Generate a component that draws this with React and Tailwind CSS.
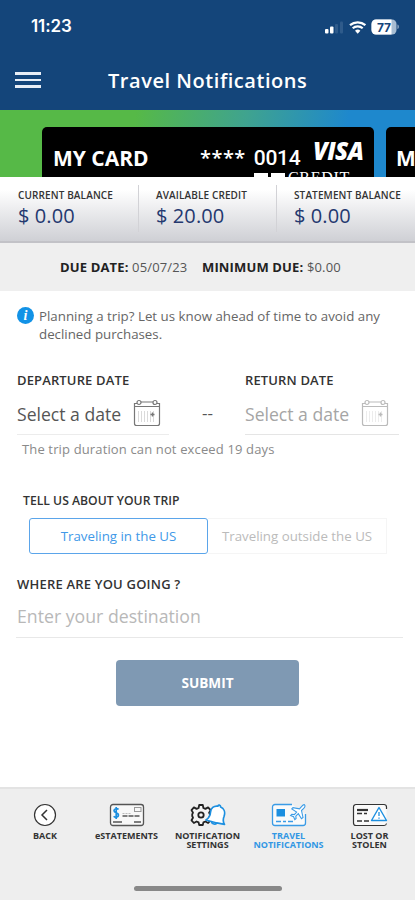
import React, { useState } from 'react';

const balances = [
  { label: 'CURRENT BALANCE', value: '$ 0.00', box: 'w-[139px] pl-[18px] border-r' },
  { label: 'AVAILABLE CREDIT', value: '$ 20.00', box: 'w-[138px] pl-[17px] border-r' },
  { label: 'STATEMENT BALANCE', value: '$ 0.00', box: 'w-[138px] pl-[17px]' },
];

function StatusIcons() {
  return (
    <svg width="78" height="18" viewBox="0 0 78 18" fill="none">
      {/* Signal */}
      <rect x="2" y="11" width="3.5" height="4.5" rx="1" fill="#fff" />
      <rect x="7" y="8.5" width="3.5" height="7" rx="1" fill="#fff" />
      <rect x="12" y="6" width="3" height="9.5" rx="1" fill="#2f5b8b" />
      <rect x="17" y="3.5" width="3" height="12" rx="1" fill="#2f5b8b" />
      {/* Wifi */}
      <path d="M27 7.2a12 12 0 0 1 15.4 0" stroke="#fff" strokeWidth="2.3" />
      <path d="M29.7 10.3a7.5 7.5 0 0 1 10 0" stroke="#fff" strokeWidth="2.2" />
      <path d="M34.7 15.8l-2.7-3a4 4 0 0 1 5.4 0z" fill="#fff" />
      {/* Battery */}
      <rect x="48.5" y="1.5" width="25" height="15" rx="4.5" fill="#a7bdd3" />
      <path d="M53 1.5h15.5v15H53a4.500 4.500 0 0 1-4.500-4.500V6A4.500 4.500 0 0 1 53 1.5z" fill="#fff" />
      <path d="M74.500 6.500c1.700.5 1.700 4 0 4.500z" fill="#a7bdd3" />
      <text x="61" y="13.500" textAnchor="middle" fontSize="12" fontWeight="700" fill="#14457a" fontFamily="Inter, sans-serif">77</text>
    </svg>
  );
}

function CalendarIcon({ className }) {
  return (
    <svg width="28" height="29" viewBox="0 0 28 29" fill="none" stroke="currentColor" className={className}>
      <path d="M4 4.500H1.500v20a2 2 0 0 0 2 2h21a2 2 0 0 0 2-2v-20H24M8 3h12M1.500 7.500h25" strokeWidth="1.200" />
      <circle cx="6" cy="3.500" r="2" strokeWidth="1.200" />
      <circle cx="22" cy="3.500" r="2" strokeWidth="1.200" />
      <path d="M5.500 12v11M8.500 12v11M11.500 12v11M14.500 12v11M17.500 12v11M20.500 12v11" strokeWidth="0.800" opacity="0.350" />
      <path d="M17.500 15.500h4M19.500 13.500v4" strokeWidth="1.400" />
    </svg>
  );
}

function BackIcon() {
  return (
    <svg width="24" height="24" viewBox="0 0 24 24" fill="none" stroke="#333" strokeWidth="1.200">
      <circle cx="12" cy="12" r="10.500" fill="#fff" />
      <path d="M14 7l-5 5 5 5" strokeWidth="1.500" />
    </svg>
  );
}

function StatementsIcon() {
  return (
    <svg width="36" height="24" viewBox="0 0 36 24" fill="none" stroke="#555">
      <rect x="1.500" y="1.500" width="33" height="21" rx="2.500" fill="#f8f8f8" strokeWidth="1.300" />
      <path d="M9.500 6.500C8.500 5.300 5 5.300 5 7.700s4.500 1.900 4.500 4.300S6 14.700 4.700 13.200M7.200 4v12" stroke="#1c8fe0" strokeWidth="1.700" />
      <rect x="25.500" y="4.500" width="6.500" height="4" stroke="#999" strokeWidth="1" />
      <path d="M13.500 10.500h9" stroke="#bbb" strokeDasharray="2 1" />
      <path d="M13.500 13h18" strokeWidth="1.500" strokeDasharray="5 1" />
      <path d="M4 19h9M25 19h7" strokeWidth="1.300" />
    </svg>
  );
}

function SettingsIcon() {
  return (
    <svg width="36" height="24" viewBox="0 0 36 24" fill="none">
      <path
        d="M9.200 2h3.600l.6 3 2 .9 2.700-1.500 2.500 2.700-1.500 2.600.8 1.800v1.500l-.8 1.700 1.500 2.600-2.500 2.700-2.700-1.500-2 .9-.6 2.600H9.200l-.6-2.600-2-.9-2.700 1.500-2.400-2.700L3 14.700 2.200 13v-1.600L3 9.700 1.500 7.100l2.400-2.700 2.700 1.500 2-.9z"
        fill="#f4f4f4" stroke="#222" strokeWidth="1.800" strokeLinejoin="round"
      />
      <circle cx="11" cy="12" r="2.700" stroke="#222" strokeWidth="1.800" />
      {/* Bell, tilted to the right */}
      <path
        d="M28 3.200c-4.300-.7-7.200 2-7.500 6-.2 3.500-1.500 5.700-4.500 7.800l5.300 1.500c.8 3 4.200 3.200 5.500 1.400l7.700 1.500c-1.700-2.700-1.600-5.200-.4-8.200 1.400-4.100-.2-7.800-3.500-9.200.1-2.100-2.500-2.700-2.600-.8z"
        fill="#fff" stroke="#1c8fe0" strokeWidth="1.700" strokeLinejoin="round"
      />
      <path d="M21.300 18.500l5.500 1.400" stroke="#1c8fe0" strokeWidth="1.500" />
    </svg>
  );
}

function TravelIcon() {
  return (
    <svg width="36" height="24" viewBox="0 0 36 24" fill="none" stroke="#3a9be6">
      <path d="M21 1.500H4A2.500 2.500 0 0 0 1.500 4v16A2.500 2.500 0 0 0 4 22.500h28a2.500 2.500 0 0 0 2.500-2.500v-9" fill="#fafafa" strokeWidth="1.300" />
      <rect x="5.500" y="6" width="8.500" height="7.500" fill="#1c8fe0" stroke="none" />
      <path d="M5 18.500h5M12 18.500h3M17 18.500h5" strokeWidth="1.500" />
      <path
        d="M33.500 1.800c1 1 .3 2.500-.8 3.500L30.500 7.500l1.500 7-1.500 1.200-3.200-5-2.500 2.400.3 2.400-1.300 1.100-1.200-2.800-3-1.200 1.200-1.300 2.500.3 2.300-2.500L20.800 6l1.200-1.300 6.500 1.200 2.200-2.500c1-1.200 2-2.200 2.800-1.600z"
        fill="#fff" strokeWidth="1.100"
      />
    </svg>
  );
}

function LostIcon() {
  return (
    <svg width="36" height="24" viewBox="0 0 36 24" fill="none" stroke="#333">
      <path d="M34.500 6V4A2.500 2.500 0 0 0 32 1.500H4A2.500 2.500 0 0 0 1.500 4v16A2.500 2.500 0 0 0 4 22.500h28a2.500 2.500 0 0 0 2.500-2" fill="#fafafa" strokeWidth="1.200" />
      <path d="M5 7h11" strokeWidth="2.200" />
      <path d="M5 10.500h5M12 10.500h3M5 18h5M12 18h5" strokeWidth="1.300" />
      <path d="M27 4.500l7.500 13h-15z" fill="#fff" stroke="#1c8fe0" strokeWidth="1.400" strokeLinejoin="round" />
      <path d="M27 9v4M27 14.500v1.300" stroke="#1c8fe0" strokeWidth="1.300" />
    </svg>
  );
}

const tabs = [
  { id: 'back', label: 'BACK', Icon: BackIcon, box: 'w-[70px] ml-[10px]' },
  { id: 'statements', label: 'eSTATEMENTS', Icon: StatementsIcon, box: 'w-[81px] ml-[6px]' },
  { id: 'settings', label: 'NOTIFICATION\nSETTINGS', Icon: SettingsIcon, box: 'w-[81px]' },
  { id: 'travel', label: 'TRAVEL\nNOTIFICATIONS', Icon: TravelIcon, box: 'w-[81px]' },
  { id: 'lost', label: 'LOST OR\nSTOLEN', Icon: LostIcon, box: 'w-[81px]' },
];

export default function App() {
  const [region, setRegion] = useState('us');

  return (
    <div className="w-[415px] h-[900px] overflow-hidden bg-white flex flex-col font-['Open_Sans',sans-serif] text-[#333] whitespace-nowrap">
      {/* Header */}
      <header className="h-[110px] shrink-0 bg-[#14457a] text-white">
        <div className="h-[53px] flex items-center justify-between pl-[31px] pr-[14px]">
          <span className="font-['Inter',sans-serif] font-semibold text-[17px] tracking-[-0.1px]">11:23</span>
          <StatusIcons />
        </div>
        <div className="h-[54px] flex items-center">
          <button className="ml-[15px] w-[26px] flex flex-col gap-[4px]">
            <span className="h-[2.500px] bg-[#e8eef6]"></span>
            <span className="h-[2.500px] bg-[#e8eef6]"></span>
            <span className="h-[2.500px] bg-[#e8eef6]"></span>
          </button>
          <h1 className="ml-[67px] mt-px text-[20px] font-semibold tracking-[0.55px]">Travel Notifications</h1>
        </div>
      </header>

      {/* Cards */}
      <div className="h-[67px] shrink-0 overflow-hidden flex gap-[12px] pl-[42px] pt-[17px] bg-[linear-gradient(100deg,#56b947_32%,#3fa38f_58%,#1e88cd_82%)]">
        <div className="relative w-[332px] h-[60px] shrink-0 rounded-t-[5px] bg-black text-white flex items-start">
          <span className="ml-[11px] mt-[14px] w-[147px] text-[21px] leading-[34px] font-bold">MY CARD</span>
          <span className="mt-[14px] text-[20px] leading-[34px] font-semibold tracking-[0.5px]">****</span>
          <span className="ml-[8px] mt-[14px] font-['Roboto',sans-serif] text-[21px] leading-[34px] font-medium tracking-[-0.3px]">0014</span>
          <span className="absolute left-[271px] top-[9px] text-[24px] leading-[30px] font-extrabold italic tracking-[-0.6px]">VISA</span>
          <span className="absolute left-[212px] top-[46px] w-[14px] h-[10px] bg-white"></span>
          <span className="absolute left-[229px] top-[46px] w-[14px] h-[10px] bg-white"></span>
          <span className="absolute left-[246px] top-[42px] font-['Liberation_Serif',serif] text-[16px] leading-[18px] tracking-[0.7px]">CREDIT</span>
        </div>
        <div className="w-[332px] h-[60px] shrink-0 rounded-t-[5px] bg-black text-white">
          <span className="block ml-[10px] mt-[14px] text-[21px] leading-[34px] font-bold">MY CARD</span>
        </div>
      </div>

      {/* Balances */}
      <div className="h-[66px] shrink-0 flex pt-[8px] pb-[9px] border-b-2 border-[#c2c2c7] bg-linear-to-b from-white from-20% to-[#cfd0d5]">
        {balances.map((b) => (
          <div key={b.label} className={`${b.box} border-[#d2d2d6] shrink-0`}>
            <div className="pt-[3px] text-[10px] leading-[14px] font-semibold tracking-[0.12px]">{b.label}</div>
            <div className="text-[20px] leading-[28px] tracking-[0.1px] text-[#24386f]">{b.value}</div>
          </div>
        ))}
      </div>

      {/* Due */}
      <div className="h-[48px] shrink-0 bg-[#efefef] flex items-center pl-[60px] pt-px text-[13px] tracking-[0.15px] text-[#555]">
        <span className="w-[142px]"><b className="text-[#222]">DUE DATE:</b> 05/07/23</span>
        <span><b className="text-[#222]">MINIMUM DUE:</b> $0.00</span>
      </div>

      <main className="flex-1">
        <div className="flex pl-[17px] pt-[16px]">
          <span className="w-[17px] h-[17px] rounded-full bg-[#1292e6] text-white text-center font-['Liberation_Serif',serif] font-bold italic text-[14px] leading-[17px]">i</span>
          <p className="ml-[5px] text-[13.300px] leading-[18px] text-[#666]">
            Planning a trip? Let us know ahead of time to avoid any
            <br />
            declined purchases.
          </p>
        </div>

        {/* Dates */}
        <div className="flex mt-[28px] pl-[17px]">
          <div className="w-[228px]">
            <div className="text-[13px] leading-[18px] font-semibold tracking-[0.14px]">DEPARTURE DATE</div>
            <div className="flex">
              <div className="mt-[10px] w-[152px] h-[36px] flex items-start border-b border-[#ececec]">
                <span className="w-[116px] text-[17.600px] leading-[30px] text-[#555]">Select a date</span>
                <CalendarIcon className="shrink-0 text-[#777]" />
              </div>
              <span className="ml-[33px] mt-[10px] text-[17px] leading-[28px] text-[#555]">--</span>
            </div>
          </div>
          <div>
            <div className="text-[13px] leading-[18px] font-semibold tracking-[0.14px]">RETURN DATE</div>
            <div className="mt-[10px] w-[154px] h-[36px] flex items-start border-b border-[#e5e5e5]">
              <span className="w-[116px] text-[17.600px] leading-[30px] text-[#a5a5a5]">Select a date</span>
              <CalendarIcon className="shrink-0 text-[#bbb]" />
            </div>
          </div>
        </div>
        <p className="mt-[4px] ml-[22px] text-[13px] leading-[20px] tracking-[0.14px] text-[#8a8a8a]">The trip duration can not exceed 19 days</p>

        {/* Trip region */}
        <div className="mt-[33px] ml-[23px] text-[12.200px] leading-[18px] font-semibold">TELL US ABOUT YOUR TRIP</div>
        <div className="mt-[8px] ml-[29px] flex h-[36px] text-[13.300px]">
          <button
            onClick={() => setRegion('us')}
            className={region === 'us' ? 'w-[179px] pt-px rounded-[3px] border border-[#5ba5ea] text-[#4199e8]' : 'w-[179px] pt-px border border-[#f3f3f3] text-[#bbb]'}
          >
            Traveling in the US
          </button>
          <button
            onClick={() => setRegion('outside')}
            className={region === 'outside' ? 'w-[179px] pt-px rounded-[3px] border border-[#5ba5ea] text-[#4199e8]' : 'w-[179px] pt-px border border-l-0 border-[#f5f5f5] text-[#bbb]'}
          >
            Traveling outside the US
          </button>
        </div>

        {/* Destination */}
        <div className="mt-[21px] ml-[17px] text-[13px] leading-[18px] font-semibold tracking-[0.2px]">WHERE ARE YOU GOING ?</div>
        <input
          placeholder="Enter your destination"
          className="block mt-[8px] ml-[16px] pl-px w-[387px] h-[37px] pb-[7px] border-b border-[#e8e8e8] text-[17.700px] placeholder:text-[#b8b8b8] outline-none"
        />
        <button className="block mt-[22px] ml-[116px] w-[183px] h-[46px] rounded-[4px] bg-[#7f99b3] text-white text-[13.600px] font-bold">SUBMIT</button>
      </main>

      {/* Bottom tabs */}
      <footer className="h-[113px] shrink-0 border-t-2 border-[#e3e3e3] bg-[#eee]">
        <nav className="flex h-[97px] pt-[14px]">
          {tabs.map(({ id, label, Icon, box }) => (
            <button key={id} className={`${box} shrink-0 flex flex-col items-center justify-start`}>
              <Icon />
              <span
                className={
                  id === 'travel'
                    ? 'mt-[4px] whitespace-pre text-[9px] leading-[9px] font-bold text-[#3297e4]'
                    : 'mt-[4px] whitespace-pre text-[9px] leading-[9px] font-bold text-[#333]'
                }
              >
                {label}
              </span>
            </button>
          ))}
        </nav>
        <div className="mx-auto w-[148px] h-[5px] rounded-full bg-[#888]"></div>
      </footer>
    </div>
  );
}
